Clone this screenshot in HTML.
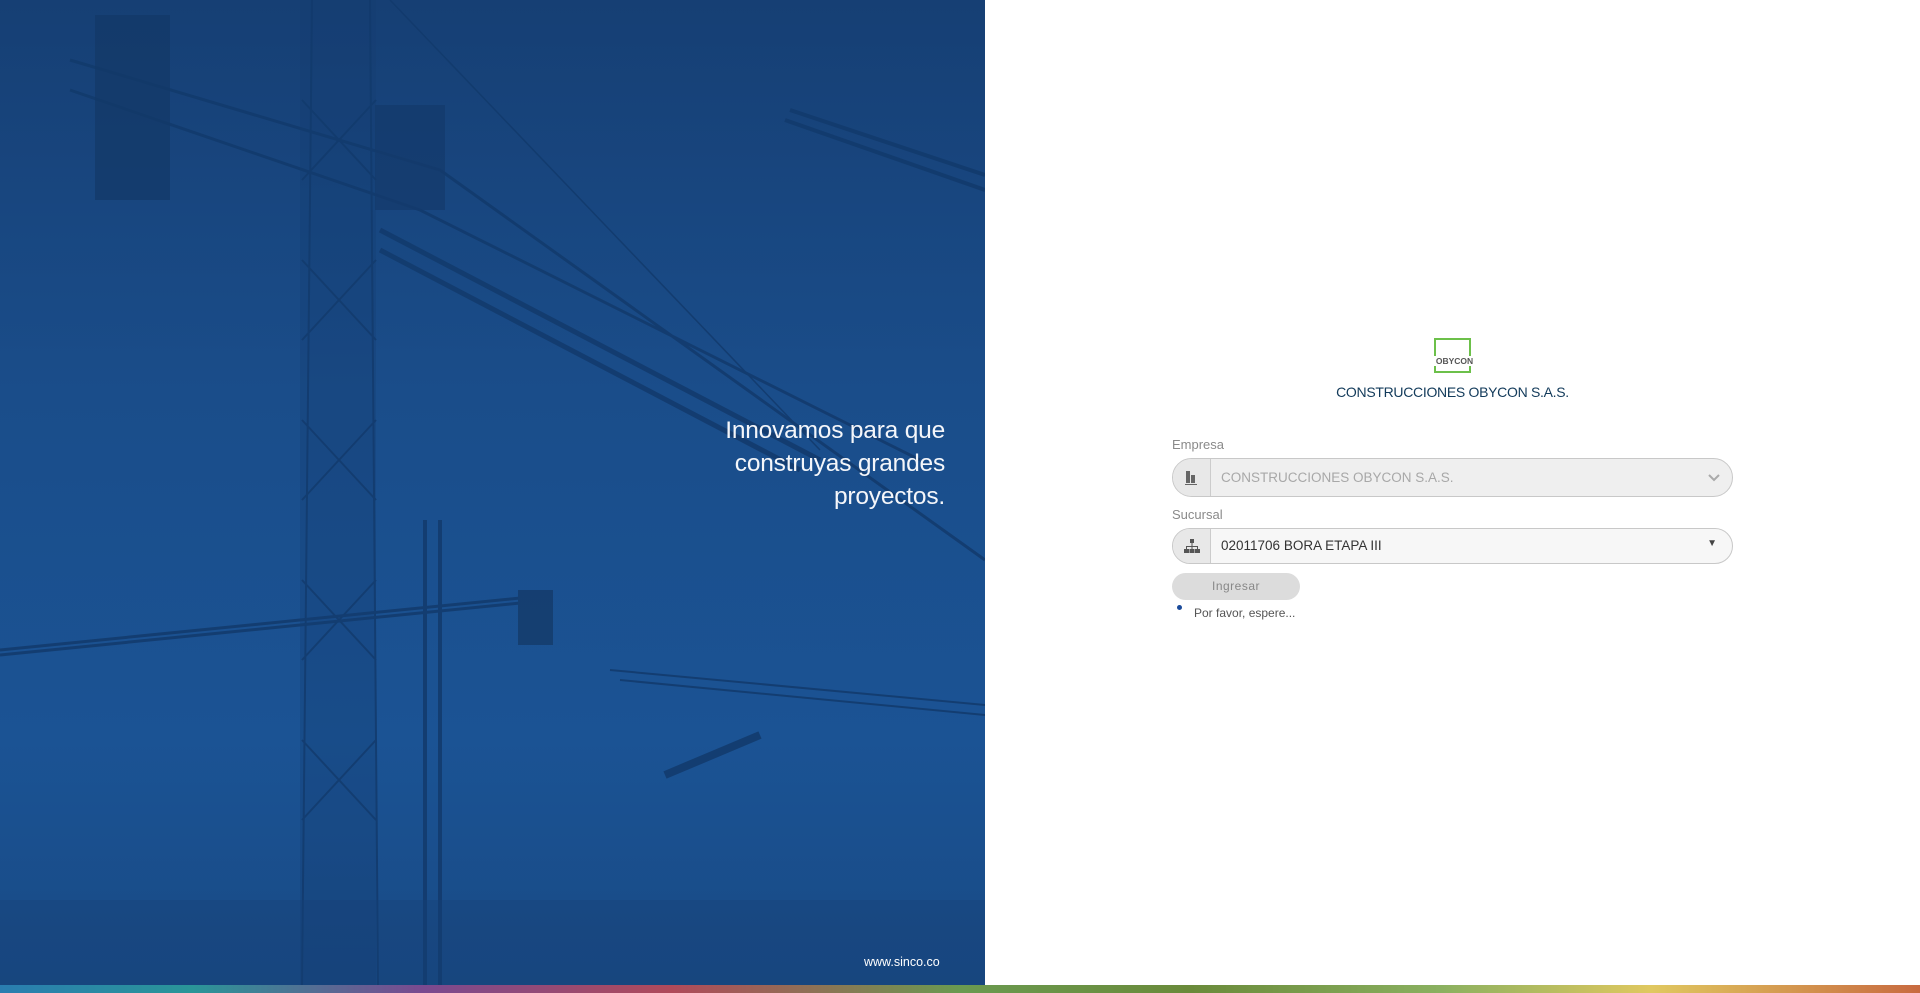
<!DOCTYPE html>
<html><head><meta charset="utf-8"><style>
*{margin:0;padding:0;box-sizing:border-box}
body{width:1920px;height:993px;overflow:hidden;background:#fff;font-family:"Liberation Sans",sans-serif;position:relative}
#left{position:absolute;left:0;top:0;width:985px;height:985px;background:linear-gradient(180deg,#163f74 0%,#1a4d8a 40%,#1b5394 75%,#184a85 100%);overflow:hidden}
#stripe{position:absolute;left:0;top:985px;width:1920px;height:8px;background:linear-gradient(90deg,#2a7db0 0%,#2a9698 10%,#7a4a90 22%,#b04a5a 35%,#6a9a50 50%,#6a8a3a 62%,#8ab060 75%,#e0c860 86%,#c86a40 100%)}
.slogan{position:absolute;right:40px;top:414px;color:#f4f6fa;font-size:24.5px;text-align:right;line-height:33px;letter-spacing:-.2px}
.web{position:absolute;left:864px;top:955px;color:#fff;font-size:12.5px}
.logo{position:absolute;left:1434px;top:338px;width:37px;height:35px;border:2px solid #6cc04a}
.logo span{position:absolute;left:-4px;top:16px;font-size:8.5px;font-weight:bold;color:#555;width:45px;text-align:center;background:#fff}
.title{position:absolute;left:1172px;width:561px;top:384px;text-align:center;font-size:14px;color:#123a5a;letter-spacing:-.3px}
.lbl{position:absolute;left:1172px;font-size:13px;color:#8a8a8a}
.sel{position:absolute;left:1172px;width:561px;border:1px solid #c8c8c8;border-radius:20px;background:#f7f7f7;overflow:hidden}
.sel .ic{position:absolute;left:0;top:0;bottom:0;width:38px;background:#e8e8e8;border-right:1px solid #ccc}
.sel .tx{position:absolute;left:48px;font-size:13.5px}
.btn{position:absolute;left:1172px;top:573px;width:128px;height:27px;border-radius:14px;background:#dcdcdc;color:#888;font-size:12px;text-align:center;line-height:27px;letter-spacing:.5px}
</style></head><body>
<div id="left">
<svg width="985" height="985" style="position:absolute;left:0;top:0" fill="none" stroke="#123a6c" stroke-width="2" opacity=".85">
<rect x="300" y="0" width="76" height="985" fill="#133d70" stroke="none" opacity=".35"/>
<path d="M312 0 L302 985 M370 0 L378 985 M302 100 L376 180 M376 100 L302 180 M302 260 L376 340 M376 260 L302 340 M302 420 L376 500 M376 420 L302 500 M302 580 L376 660 M376 580 L302 660 M302 740 L376 820 M376 740 L302 820"/>
<path d="M70 60 L440 170 L985 560 M70 90 L420 210 L920 460" stroke-width="3"/>
<path d="M380 230 L820 460 M380 250 L800 470" stroke-width="5"/>
<rect x="95" y="15" width="75" height="185" fill="#133866" stroke="none" opacity=".8"/>
<rect x="375" y="105" width="70" height="105" fill="#143a6a" stroke="none" opacity=".8"/>
<path d="M790 110 L985 175 M785 120 L985 190" stroke-width="4"/>
<path d="M0 655 L550 600 M0 650 L550 595" stroke-width="3"/>
<rect x="518" y="590" width="35" height="55" fill="#153c6c" stroke="none"/>
<path d="M425 520 L425 985 M440 520 L440 985" stroke-width="4"/>
<path d="M610 670 L985 705 M620 680 L985 715" stroke-width="2"/>
<path d="M665 775 L760 735" stroke-width="8"/>
<path d="M390 0 L820 450" stroke-width="1.5"/>
<rect x="0" y="900" width="985" height="85" fill="#173f74" stroke="none" opacity=".4"/>
</svg>
<div class="slogan">Innovamos para que<br>construyas grandes<br>proyectos.</div>
<div class="web">www.sinco.co</div>
</div>
<div id="stripe"></div>
<div class="logo"><span>OBYCON</span></div>
<div class="title">CONSTRUCCIONES OBYCON S.A.S.</div>
<div class="lbl" style="top:437px">Empresa</div>
<div class="sel" style="top:458px;height:39px;background:#efefef">
<div class="ic"><svg width="38" height="37"><path d="M13 12h4v12h-4zM18 16h4v8h-4zM12 25h12v1h-12z" fill="#666"/></svg></div>
<div class="tx" style="top:11px;color:#a8a8a8">CONSTRUCCIONES OBYCON S.A.S.</div>
<svg style="position:absolute;right:12px;top:15px" width="12" height="8"><path d="M1 1l5 5 5-5" stroke="#aaa" stroke-width="2" fill="none"/></svg>
</div>
<div class="lbl" style="top:507px">Sucursal</div>
<div class="sel" style="top:528px;height:36px">
<div class="ic"><svg width="38" height="34"><path d="M17 10h4v4h-4zM18.5 14h1v3h-1zM13 17h12v1h-12zM13 18h1v2h-1zM24 18h1v2h-1zM18.5 18h1v2h-1zM11 20h5v4h-5zM16.5 20h5v4h-5zM22 20h5v4h-5z" fill="#555"/></svg></div>
<div class="tx" style="top:9px;color:#333;left:48px">02011706 BORA ETAPA III</div>
<div style="position:absolute;right:15px;top:9px;font-size:10px;color:#444">▼</div>
</div>
<div class="btn">Ingresar</div>
<div style="position:absolute;left:1177px;top:605px;width:5px;height:5px;border-radius:50%;background:#1a4a9a"></div>
<div style="position:absolute;left:1194px;top:606px;font-size:12px;color:#555">Por favor, espere...</div>
</body></html>
